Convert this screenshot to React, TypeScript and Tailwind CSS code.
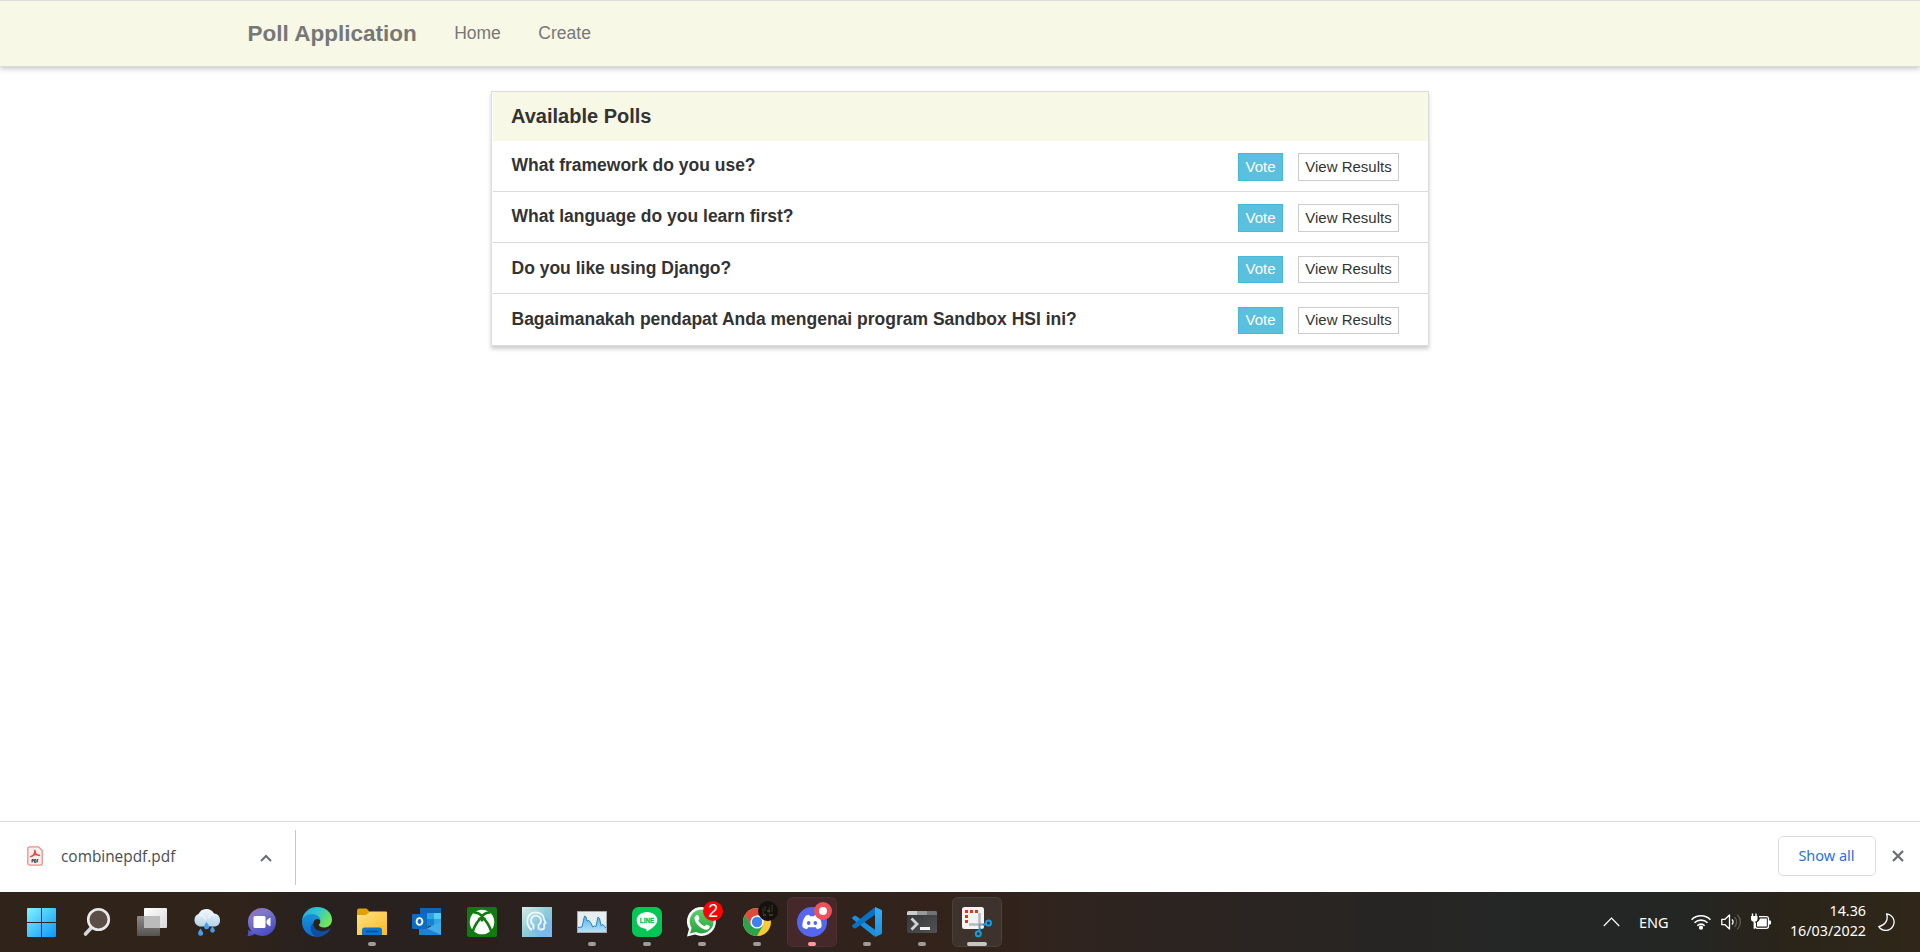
import React from "react";

const polls = [
  { question: "What framework do you use?", text: "mt-[14px]", actions: "mt-[12px]", button: "h-[28px]" },
  { question: "What language do you learn first?", text: "mt-[14px]", actions: "mt-[12px]", button: "h-[28px]" },
  { question: "Do you like using Django?", text: "mt-[15px]", actions: "mt-[13px]", button: "h-[27px] pb-px" },
  { question: "Bagaimanakah pendapat Anda mengenai program Sandbox HSI ini?", text: "mt-[15px]", actions: "mt-[13px]", button: "h-[27px] pb-px" },
];

function NavBar() {
  return (
    <header className="flex h-[67px] shrink-0 items-start border-t border-b border-t-[#dcdcdc] border-b-[#dcdcdc] bg-[#f7f8e5] pl-[247.5px] text-[#777777] shadow-[0_2px_5px_rgba(0,0,0,0.22)]">
      <span className="mt-[20px] text-[22.5px] leading-[25px] font-bold">Poll Application</span>
      <nav className="mt-[20px] flex gap-[37.5px] pl-[37.5px] text-[17.5px] leading-[25px]">
        <a>Home</a>
        <a>Create</a>
      </nav>
    </header>
  );
}

function PollPanel() {
  return (
    <section className="mt-[24px] ml-[491px] h-[255px] w-[938px] border border-[#dcdcdc] bg-white text-[#333333] shadow-[0_3px_4px_rgba(0,0,0,0.2)]">
      <h2 className="ml-px h-[49px] bg-[#f7f8e5] pt-[12px] pl-[18px] text-[20px] leading-[24px] font-bold">Available Polls</h2>
      <ul>
        {polls.map((p) => (
          <li key={p.question} className="ml-px flex h-[51px] justify-between border-b border-[#dcdcdc] pr-[29px] pl-[18.500px] last:border-b-0">
            <span className={`${p.text} text-[17.5px] leading-[20px] font-bold`}>{p.question}</span>
            <span className={`${p.actions} flex gap-[15px] text-[15px] leading-[24px]`}>
              <button className={`${p.button} w-[45px] border border-[#46b8da] bg-[#5bc0de] text-white`}>Vote</button>
              <button className={`${p.button} w-[101px] border border-[#cccccc] bg-white`}>View Results</button>
            </span>
          </li>
        ))}
      </ul>
    </section>
  );
}

function DownloadBar() {
  return (
    <div className="flex h-[71px] shrink-0 border-t border-[#dadce0] bg-white font-['Open_Sans',sans-serif]">
      <div className="mt-[8px] flex h-[55px] w-[296px] items-center border-r border-[#c8c8c8] pl-[27px]">
        <svg width="16" height="20" viewBox="0 0 16 20" className="mb-[4px]">
          <path d="M2.5.8h9l3.7 3.800v12.600a2 2 0 0 1-2 2H2.800a2 2 0 0 1-2-2V2.800a2 2 0 0 1 1.700-2z" fill="#f5f0f0" stroke="#f58a86" strokeWidth="1.3" />
          <path d="M3.7 10.600c3-.8 4.300-3.500 4.200-6.400M8 5c.2 2.300 1.700 4.300 4.400 4.300M4 10.500c2.400-2 5.400-2.300 8.300-1.100" fill="none" stroke="#f03f38" strokeWidth="1.400" strokeLinecap="round" />
          <path d="M5 16.500v-3h1.300v1.500H5M7.400 13.500v3h1.400v-3zM11.300 13.500h-1.200v3M10.100 15h1.100" fill="none" stroke="#333" strokeWidth=".9" />
        </svg>
        <span className="mb-[2px] ml-[18px] w-[199px] text-[15.4px] leading-[22px] text-[#4a4d51]">combinepdf.pdf</span>
        <svg width="12" height="8" viewBox="0 0 12 8">
          <path d="M1 7l5-5 5 5" fill="none" stroke="#6b6f74" strokeWidth="2" />
        </svg>
      </div>
      <div className="ml-auto flex items-start pt-[14px] pr-[16.500px]">
        <button className="h-[40px] w-[98px] rounded-[5px] border border-[#dadce0] pr-px pb-[2px] font-['Noto_Sans',sans-serif] text-[14.5px] leading-[36px] text-[#2a6fe8]">Show all</button>
        <svg width="12" height="12" viewBox="0 0 12 12" className="mt-[14px] ml-[15.500px]">
          <path d="M1 1l10 10M11 1L1 11" stroke="#6b6f74" strokeWidth="2.300" />
        </svg>
      </div>
    </div>
  );
}

/* Each cell is 55x60 and its origin is the icon centre. */
function Cell({ children, dot, active }: { children: React.ReactNode; dot?: string; active?: boolean }) {
  return (
    <svg width="55" height="60" viewBox="-28 -30 55 60" className="shrink-0">
      {children}
      {dot && <rect x={active ? -10 : -4} y="20" width={active ? 20 : 8} height="4" rx="2" fill={dot} />}
    </svg>
  );
}

const GREY = "#a19b98";

function TaskIcons() {
  return (
    <div className="flex pl-[14px]">
      <svg width="0" height="0">
        <defs>
          <linearGradient id="win" gradientUnits="userSpaceOnUse" x1="-15" y1="-14" x2="14" y2="15"><stop stopColor="#7ff5ff" /><stop offset=".55" stopColor="#3fc0fa" /><stop offset="1" stopColor="#0d97fb" /></linearGradient>
          <linearGradient id="tv" x1="0" y1="0" x2="1" y2="1"><stop stopColor="#fff" /><stop offset="1" stopColor="#d8d8d8" /></linearGradient>
          <linearGradient id="tv2" x1="0" y1="0" x2="0" y2="1"><stop stopColor="#8e8b89" /><stop offset="1" stopColor="#55534f" /></linearGradient>
          <linearGradient id="cloud" x1="0" y1="0" x2="0" y2="1"><stop stopColor="#f4fafe" /><stop offset="1" stopColor="#b3d2e8" /></linearGradient>
          <linearGradient id="chat" x1="0" y1="0" x2=".5" y2="1"><stop stopColor="#a86aa8" /><stop offset=".35" stopColor="#7d78cc" /><stop offset="1" stopColor="#4b4fc4" /></linearGradient>
          <linearGradient id="edge1" x1="0" y1="0" x2="1" y2=".5"><stop stopColor="#24a5e4" /><stop offset=".5" stopColor="#2fc6d0" /><stop offset="1" stopColor="#74e657" /></linearGradient>
          <linearGradient id="edge2" x1="0" y1="0" x2="0" y2="1"><stop stopColor="#1893d9" /><stop offset="1" stopColor="#0b6bd1" /></linearGradient>
          <linearGradient id="fold" x1="0" y1="0" x2="1" y2="1"><stop stopColor="#ffe28a" /><stop offset="1" stopColor="#fcbc1e" /></linearGradient>
          <linearGradient id="head" x1="0" y1="0" x2="1" y2="1"><stop stopColor="#d9ebe6" /><stop offset=".5" stopColor="#8ccbd8" /><stop offset="1" stopColor="#7db5f2" /></linearGradient>
          <linearGradient id="graph" x1="0" y1="0" x2="0" y2="1"><stop stopColor="#4fb5ec" /><stop offset="1" stopColor="#b9e0f8" /></linearGradient>
          <linearGradient id="wa" x1="0" y1="0" x2="0" y2="1"><stop stopColor="#5fd06a" /><stop offset="1" stopColor="#27a33d" /></linearGradient>
          <linearGradient id="term" x1="0" y1="0" x2="1" y2="1"><stop stopColor="#333436" /><stop offset="1" stopColor="#515254" /></linearGradient>
          <linearGradient id="vs" x1="0" y1="0" x2="0" y2="1"><stop stopColor="#36adf3" /><stop offset="1" stopColor="#1c92e0" /></linearGradient>
        </defs>
      </svg>
      <Cell>
        <path d="M-15-13a1 1 0 0 1 1-1H-1V0h-14zM0-14H13a1 1 0 0 1 1 1V0H0zM-15 1H-1V15h-13a1 1 0 0 1-1-1zM0 1H14V14a1 1 0 0 1-1 1H0z" fill="url(#win)" />
      </Cell>
      <Cell>
        <path d="M-5.500 5.500l-6 6.500" stroke="#d6d6d6" strokeWidth="3.600" strokeLinecap="round" />
        <circle cx="1.500" cy="-2.500" r="10.300" fill="#5b4e46" stroke="#e9e9e9" strokeWidth="2.600" />
      </Cell>
      <Cell>
        <rect x="-15" y="-6" width="23" height="20" rx="1" fill="url(#tv2)" />
        <rect x="-8" y="-14" width="23" height="20" rx="1" fill="url(#tv)" />
        <path d="M-8-6H8V6H-7a1 1 0 0 1-1-1z" fill="#bcbbbb" />
      </Cell>
      <Cell>
        <path d="M-7.500 4.500a6.600 6.600 0 0 1-1-12.500a8.700 8.700 0 0 1 15.500-.5a6.700 6.700 0 0 1 1.500 13z" fill="url(#cloud)" />
        <path d="M-8.500-7a6 6 0 0 1 7 4.500M7-8a7 7 0 0 0-6 4" stroke="#fff" strokeWidth="1" fill="none" />
        <path d="M-6.500 6.500c1.700 2.600 2.600 3.600 2.600 4.700a2.400 2.400 0 0 1-5 0c0-1.300 1-2.300 2.400-4.700zM-.5 0c1.700 2.600 2.600 3.600 2.600 4.700a2.400 2.400 0 0 1-5 0c0-1.300 1-2.300 2.400-4.700zM5.500 4c1.500 2.300 2.400 3.300 2.400 4.300a2.300 2.300 0 0 1-4.700 0c0-1.200 1-2.100 2.300-4.300z" fill="#469ee8" />
      </Cell>
      <Cell>
        <path d="M-14.500 14c.9-2 .8-4 .6-6L-6 11c-2 2-5 3-8.500 3z" fill="#5154c6" />
        <circle cx="0" cy="0" r="14" fill="url(#chat)" />
        <rect x="-8.500" y="-6" width="12" height="12" rx="1.500" fill="#fff" />
        <path d="M5-1.500l3-2.500v8l-3-2.500z" fill="#fff" stroke="#fff" strokeLinejoin="round" />
      </Cell>
      <Cell>
        <path d="M-15 0C-15-9-8-15 0-15c9 0 15 6 15 12.500C15 3 11 5.500 7 5.500c-3 0-5-1-5-2.500 0-1 1.300-1.500 1.300-3.500 0-3-3-6-8-6S-15-3-15 0z" fill="url(#edge1)" />
        <path d="M-15 0c.3-4.500 4.300-8 9.500-8C.5-8 3.600-4.500 3.400-1.200 1.500-4-3-3.500-3.800 1.500-4.600 6.500-1 12 5 14 -5 17-15 10.500-15 0z" fill="url(#edge2)" />
        <path d="M-3.800 1C-4 6.500 1 10 7 9c2.200-.4 3.800-1 5.600-2.300.6-.3 1 .3.600.9C10.500 12 6 15 0 15c-6-2.500-9-9.500-3.800-14z" fill="#114f9c" />
      </Cell>
      <Cell dot={GREY}>
        <path d="M-15-11.500a2 2 0 0 1 2-2h7.500l3.500 3.500H-2v5h-13z" fill="#e2a008" />
        <path d="M-15-7h9l4-3.500H14a1 1 0 0 1 1 1V13H-15z" fill="url(#fold)" />
        <path d="M-10 13V8a2.500 2.500 0 0 1 2.500-2.500h15A2.500 2.500 0 0 1 10 8v5z" fill="#1173c9" />
        <path d="M-5.500 9.500h11" stroke="#0a4c8f" strokeWidth="1.600" strokeLinecap="round" />
      </Cell>
      <Cell>
        <path d="M-7-14H14V0L-7 8z" fill="#1066b5" />
        <path d="M0-9h7v6H0z" fill="#32a0e5" /><path d="M7-9h7v6H7z" fill="#50d0f6" /><path d="M7-3h7V2L7 5z" fill="#2fa2e8" /><path d="M0-3h7v7H0z" fill="#1a82cf" />
        <path d="M-8 1l10 5L14-1v14H-8z" fill="#1a83d6" /><path d="M0 6.500L14 13V-1z" fill="#3eaeea" />
        <rect x="-15" y="-8" width="15" height="15" rx="1.300" fill="#0a6cc7" />
        <ellipse cx="-7.500" cy="-.5" rx="2.900" ry="3.400" fill="none" stroke="#fff" strokeWidth="1.900" />
      </Cell>
      <Cell>
        <rect x="-15" y="-15" width="30" height="30" rx="2" fill="#107c10" />
        <circle cx="0" cy="0" r="12.300" fill="#fff" />
        <path d="M-8.500-9.500C-5-10-2-8 0-6.300 2-8 5-10 8.500-9.500M-9.500 10C-7 2.500-3-2.500 0-5 3-2.500 7 2.500 9.500 10" stroke="#107c10" strokeWidth="2.600" fill="none" />
        <path d="M-4.500-4Q-2-4 0-6Q2-4 4.500-4Q1.500-2 0 0Q-1.500-2-4.500-4z" fill="#107c10" />
      </Cell>
      <Cell>
        <rect x="-15" y="-15" width="30" height="30" fill="url(#head)" />
        <path d="M-5 9L2 15h13V0L8-6z" fill="#76b7ef" opacity=".6" />
        <path d="M-5 7.500H-6C-12 2-10.500-9.500-1.500-9.500 4-9.500 7-6.500 7-2.500l1.700 3.500-1.500 1V5.500c0 1.500-1 2-3 2H2.500" fill="none" stroke="#edf7fb" strokeWidth="1.800" />
        <path d="M-3.500 7.500V3a5 5 0 1 1 5 0V7.500" fill="none" stroke="#edf7fb" strokeWidth="1.900" />
      </Cell>
      <Cell dot={GREY}>
        <rect x="-14.500" y="-10.500" width="29" height="21" fill="#e8edf1" stroke="#a4a8ab" />
        <path d="M-14 10V5.500l4-.5 2.500-11 1.500 1 1 4 2-.5 2.500 3.500 1 3 2-1 1.500.5L6-5l1.500 1.500L9 3.500l2-1 3 3.500v4z" fill="url(#graph)" />
        <path d="M-14 5.500l4-.5 2.500-11 1.500 1 1 4 2-.5 2.500 3.500 1 3 2-1 1.500.5L6-5l1.500 1.500L9 3.500l2-1 3 3.500" fill="none" stroke="#2584bd" strokeWidth="1" />
      </Cell>
      <Cell dot={GREY}>
        <rect x="-15" y="-15" width="30" height="30" rx="6.500" fill="#06c755" />
        <path d="M0-10C6-10 10.300-6.300 10.300-1.800 10.300 3 4 7-.5 9.500-.2 8-.3 7-1.500 6.700-7 6-10.300 2.500-10.300-1.800-10.300-6.300-6-10 0-10z" fill="#fff" />
        <text x="0" y=".6" textAnchor="middle" className="font-['Liberation_Sans',sans-serif] text-[6.300px] font-bold" fill="#06c755" stroke="#06c755" strokeWidth=".3">LINE</text>
      </Cell>
      <Cell dot={GREY}>
        <path d="M-15 14.500l2-7.500A14.500 14.500 0 1 1-7 12.500z" fill="#fff" />
        <path d="M-12 11.500l1.600-5.500A12 12 0 1 1-6 10z" fill="url(#wa)" />
        <path d="M-6.500-6c1.200-1.500 2.500-1.500 3 0l1 2.500c0 1-1.500 1.600-1 2.500C-2 1.500 0 3 2.200 4c1 .3 1.500-1.800 2.500-1.600l3 1.600c.5 1.800-1 3.400-3 3.700C-.5 8-7.500 1-7.500-3.500c0-1 .4-2 1-2.500z" fill="#fff" />
        <circle cx="11" cy="-11" r="10" fill="#fc0404" />
        <text x="11" y="-4.800" textAnchor="middle" className="font-['Liberation_Sans',sans-serif] text-[17.5px]" fill="#fff">2</text>
      </Cell>
      <Cell dot={GREY}>
        <circle cx="0" cy="0" r="14" fill="#fbc934" />
        <path d="M0-7H12.120A14 14 0 0 0-12.120-7L-6 3.500z" fill="#dd4a3e" />
        <path d="M-12.120-7A14 14 0 0 0 0 14L6 3.500-6 3.500z" fill="#2ba24c" />
        <circle cx="0" cy="0" r="6.600" fill="#fff" /><circle cx="0" cy="0" r="5.200" fill="#3f82ee" />
        <circle cx="11" cy="-11" r="10" fill="#14120e" />
        <path d="M6-14v6M8-16v5M12-15v6M15-17v7" stroke="#3a311f" strokeWidth="1.200" />
        <path d="M6-7h3M12-7h4M10-11h3" stroke="#6c5b32" strokeWidth="1" />
      </Cell>
      <Cell dot="#ff9aa4">
        <rect x="-24.500" y="-24.500" width="49" height="49" rx="5" fill="#45292a" stroke="#4d3033" />
        <circle cx="0" cy="0" r="15" fill="#5567ee" />
        <path d="M-6-6.500l3-.8 1 1.500h4l1-1.500 3 .8C9-3 10 1 9.500 5 8 6.500 6.500 7 5 7.300L3.800 5.300h-7.600L-5 7.300C-6.500 7-8 6.500-9.500 5-10 1-9-3-6-6.500z" fill="#fff" />
        <ellipse cx="-3.300" cy="1" rx="1.800" ry="2" fill="#5567ee" /><ellipse cx="3.300" cy="1" rx="1.800" ry="2" fill="#5567ee" />
        <circle cx="11" cy="-11" r="9" fill="#ee5258" /><circle cx="11" cy="-11" r="4" fill="#fff" />
      </Cell>
      <Cell dot={GREY}>
        <path d="M-14.700-4.800q-.6.700 0 1.600L7.500 14.500 9 8.500-11.200-6.300q-.8-.5-1.600.2z" fill="#1b8fdc" />
        <path d="M-14.700 4.800q-.6-.7 0-1.600L7.500-14.500 9-8-11.200 6.300q-.8.500-1.600-.2z" fill="#0873c4" />
        <path d="M8-15l6.200 2.700q.8.400.8 1.300v22q0 .9-.8 1.300L8 15z" fill="url(#vs)" />
      </Cell>
      <Cell dot={GREY}>
        <rect x="-15" y="-11" width="30" height="22" rx="1.500" fill="url(#term)" />
        <path d="M-15-7v-2.500a1.500 1.500 0 0 1 1.500-1.500H-5v4z" fill="#ccc" /><path d="M-5-11H5v4H-5z" fill="#999" /><path d="M5-11h8.500a1.500 1.500 0 0 1 1.500 1.500V-7H5z" fill="#727272" />
        <path d="M-10.500-3.500L-5 2l-5.500 5.500" fill="none" stroke="#d2d2d2" strokeWidth="2.800" /><rect x="-2" y="5" width="10" height="3" fill="#f4f4f4" />
      </Cell>
      <Cell dot="#c9c5c2" active>
        <rect x="-24.500" y="-24.500" width="49" height="49" rx="5" fill="#3d332c" stroke="#4a413b" />
        <rect x="-15" y="-15" width="22" height="22" rx="2.500" fill="#f3f3f3" />
        <path d="M-12-12h3v3h-3zM-7-12h3v3h-3zM-2-12h3v3h-3zM-12-7h3v3h-3zM-12-2h3v3h-3z" fill="#d33d0f" />
        <path d="M2.500-9V3M-8 2.500H4" stroke="#b4b9be" strokeWidth="2.500" />
        <path d="M2.500 2v4.500M2 2.500h5" stroke="#8a98a3" strokeWidth="2" />
        <circle cx="1.300" cy="11.700" r="2.500" fill="none" stroke="#159ce1" strokeWidth="2" /><circle cx="11.500" cy="1" r="2.500" fill="none" stroke="#159ce1" strokeWidth="2" />
        <path d="M2 9.500L3.200 6M9.200 1.800L6 3" stroke="#159ce1" strokeWidth="2" />
      </Cell>
    </div>
  );
}

function Tray() {
  return (
    <div className="ml-auto flex h-full items-center pr-[25px] font-['Noto_Sans',sans-serif] text-white">
      <svg width="17" height="10" viewBox="0 0 17 10"><path d="M.8 9l7.700-7.800L16.200 9" fill="none" stroke="#fff" strokeWidth="1.200" /></svg>
      <span className="ml-[19px] w-[52px] text-[14.500px] leading-[20px]">ENG</span>
      <svg width="20" height="16" viewBox="0 0 20 16" fill="none" stroke="#fff" strokeWidth="1.600">
        <path d="M.6 5.700a13.300 13.300 0 0 1 18.800 0M3.500 8.800a9.200 9.200 0 0 1 13 0M6.300 11.700a5.200 5.200 0 0 1 7.400 0" /><circle cx="10" cy="13.700" r="1.300" fill="#fff" />
      </svg>
      <svg width="20" height="18" viewBox="0 0 20 18" className="ml-[10px]" fill="none" strokeWidth="1.300">
        <path d="M.8 6.300h3.200L8.500 2v14L4 11.700H.8z" stroke="#fff" strokeLinejoin="round" /><path d="M11 6.500a3.500 3.500 0 0 1 0 5" stroke="#fff" /><path d="M13.500 4a7 7 0 0 1 0 10M16.300 1.800a10 10 0 0 1 0 14.400" stroke="#5d5a52" />
      </svg>
      <svg width="20" height="17" viewBox="0 0 20 17" className="mb-[2px] ml-[10px]">
        <path d="M1.500.5v3M5 .5v3M3.300 7.500V15.800" stroke="#fff" strokeWidth="1.400" fill="none" /><path d="M0 3h6.500v2.500a3.200 3.200 0 0 1-6.500 0z" fill="#fff" />
        <path d="M8 3.700h7.500a2 2 0 0 1 2 2v7.600a2 2 0 0 1-2 2H6.300a2 2 0 0 1-2-2V9.500" fill="none" stroke="#fff" strokeWidth="1.300" /><path d="M9 5.500h6.800v8H6V9.200Q8.500 8 9 5.500zM18 7.500h1.200q.8 0 .8.800v2.400q0 .8-.8.800H18z" fill="#fff" />
      </svg>
      <div className="mb-[2px] ml-[11px] w-[84px] text-right text-[14.300px] leading-[20px] whitespace-nowrap">
        <div>14.36</div>
        <div>16/03/2022</div>
      </div>
      <svg width="17" height="18" viewBox="0 0 17 18" className="ml-[12px]"><path d="M8.500.8A8.300 8.300 0 1 1 .8 13.600C8 11.800 10.500 6.500 8.500.8z" fill="none" stroke="#fff" strokeWidth="1.300" strokeLinejoin="round" /></svg>
    </div>
  );
}

export default function App() {
  return (
    <div className="flex h-[952px] w-[1920px] flex-col overflow-hidden bg-white font-['Liberation_Sans',Arial,sans-serif]">
      <NavBar />
      <main className="flex-1">
        <PollPanel />
      </main>
      <DownloadBar />
      <footer className="flex h-[60px] shrink-0 items-center bg-[linear-gradient(90deg,#30231a_0%,#30231a_12%,#28211f_17%,#2c211e_32%,#33231b_50%,#2b2421_62%,#242626_80%,#242624_88%,#2a2419_93%,#30271a_100%)]">
        <TaskIcons />
        <Tray />
      </footer>
    </div>
  );
}
